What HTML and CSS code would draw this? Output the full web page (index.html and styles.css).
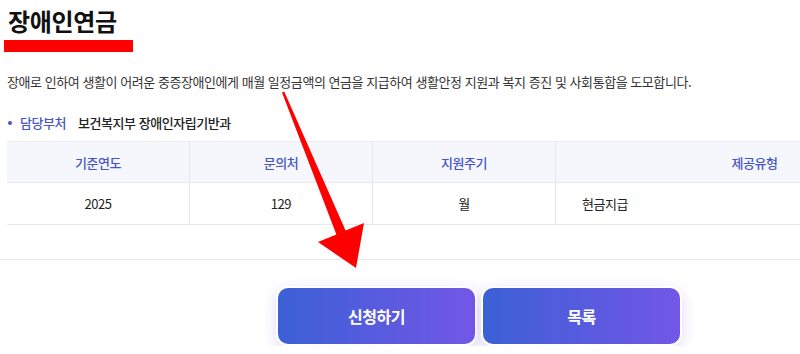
FILE: index.html
```html
<!DOCTYPE html>
<html lang="ko">
<head>
    <meta charset="UTF-8">
    <meta name="viewport" content="width=device-width, initial-scale=1.0">
    <title>장애인연금</title>
    <link rel="stylesheet" href="styles.css">
</head>
<body>
    <div class="page">
        <h1 class="title">장애인연금</h1>
        <div class="title-bar"></div>
        <p class="desc">장애로 인하여 생활이 어려운 중증장애인에게 매월 일정금액의 연금을 지급하여 생활안정 지원과 복지 증진 및 사회통합을 도모합니다.</p>
        <p class="dept"><span class="dept-label">담당부처</span><span class="dept-name">보건복지부 장애인자립기반과</span></p>
        <table class="info">
            <thead>
                <tr>
                    <th>기준연도</th>
                    <th>문의처</th>
                    <th>지원주기</th>
                    <th class="wide">제공유형</th>
                </tr>
            </thead>
            <tbody>
                <tr>
                    <td>2025</td>
                    <td>129</td>
                    <td>월</td>
                    <td class="left">현금지급</td>
                </tr>
            </tbody>
        </table>
        <hr class="divider">
        <div class="actions">
            <button class="btn">신청하기</button>
            <button class="btn">목록</button>
        </div>
    </div>
    <!-- 안내 화살표 -->
    <svg class="arrow" width="800" height="354" viewBox="0 0 800 354">
        <polygon points="282,92.4 284.2,91.6 345.6,230.6 364,223 356,268 318,242 336.4,234.4" fill="#ff0000"/>
    </svg>
</body>
</html>
```

FILE: styles.css
```css
body {
    font-family: "Noto Sans CJK KR", "Noto Sans", sans-serif;
    color: #222;
    background: #fff;
    margin: 0;
    overflow: hidden;
}
.page {
    width: 944px;
    padding: 5px 7px 0;
}
.title {
    margin: 0 0 0 1px;
    font-size: 24px;
    line-height: 32px;
    font-weight: 700;
    letter-spacing: -0.3px;
    color: #111;
}
.title-bar {
    margin: 3px 0 0 -3px;
    width: 129px;
    height: 12px;
    background: #ff0000;
}
.desc {
    margin: 20px 0 0;
    font-size: 13px;
    line-height: 20px;
    letter-spacing: -0.45px;
    color: #333;
}
.dept {
    margin: 21px 0 0;
    font-size: 13px;
    line-height: 20px;
    letter-spacing: -0.45px;
    display: flex;
    align-items: center;
}
.dept-label {
    color: #4655c8;
    font-weight: 500;
    display: flex;
    align-items: center;
    gap: 8px;
    margin-right: 12px;
}
.dept-label::before {
    content: "";
    width: 4px;
    height: 4px;
    border-radius: 50%;
    background: #4655c8;
    margin-left: 1px;
}
.dept-name {
    color: #222;
    font-weight: 500;
}
.info {
    margin-top: 8px;
    width: 946px;
    border-collapse: collapse;
    font-size: 13px;
    letter-spacing: -0.45px;
}
.info th {
    background: #f5f7fc;
    color: #4655c8;
    font-weight: 500;
    height: 40px;
    padding: 0;
    width: 182px;
    border-top: 1px solid #eceef4;
    border-bottom: 1px solid #e6e8ef;
    border-right: 1px solid #e6e8ef;
}
.info th.wide {
    width: auto;
    border-right: none;
}
.info td {
    height: 41px;
    padding: 0;
    text-align: center;
    color: #222;
    border-bottom: 1px solid #e6e8ef;
    border-right: 1px solid #e6e8ef;
}
.info td.left {
    text-align: left;
    padding-left: 26px;
    border-right: none;
}
.divider {
    margin: 34px -7px 0;
    border: none;
    border-top: 1px solid #e8e8ec;
}
.actions {
    display: flex;
    justify-content: center;
    gap: 4px;
    margin-top: 26px;
}
.btn {
    width: 201px;
    height: 60px;
    border: 2px solid #fff;
    border-radius: 12px;
    background: linear-gradient(90deg, #3c60d5, #7257e7);
    color: #fff;
    font-family: inherit;
    font-size: 16px;
    font-weight: 700;
    letter-spacing: -0.5px;
    box-shadow: 0 4px 14px rgba(98, 88, 220, 0.22);
    cursor: pointer;
}
.arrow {
    position: absolute;
    left: 0;
    top: 0;
    pointer-events: none;
}
```
